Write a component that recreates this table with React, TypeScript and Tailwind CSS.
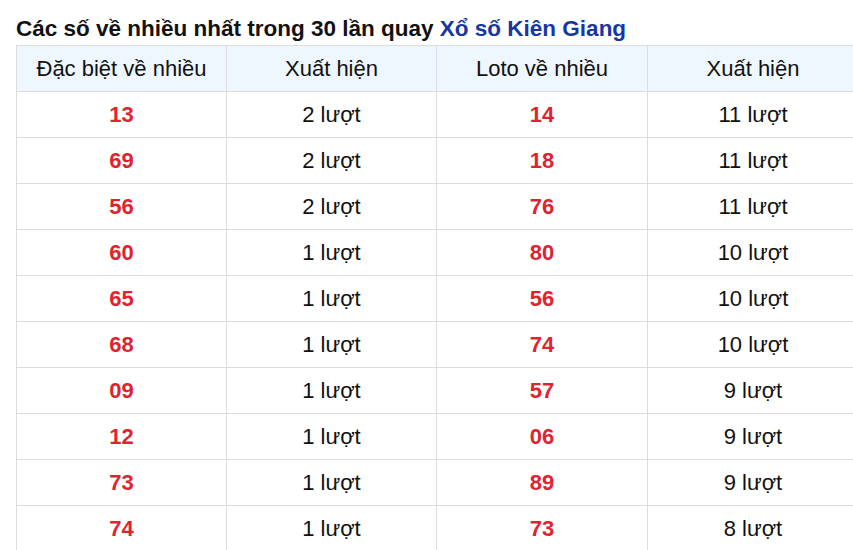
import React from 'react';

const rows: [string, string, string, string][] = [
    ['13', '2 lượt', '14', '11 lượt'],
    ['69', '2 lượt', '18', '11 lượt'],
    ['56', '2 lượt', '76', '11 lượt'],
    ['60', '1 lượt', '80', '10 lượt'],
    ['65', '1 lượt', '56', '10 lượt'],
    ['68', '1 lượt', '74', '10 lượt'],
    ['09', '1 lượt', '57', '9 lượt'],
    ['12', '1 lượt', '06', '9 lượt'],
    ['73', '1 lượt', '89', '9 lượt'],
    ['74', '1 lượt', '73', '8 lượt'],
];

const App: React.FC = () => {
    return (
        <div className="w-[853px] h-[550px] overflow-hidden bg-white pl-4 pt-[13px] font-['Liberation_Sans',Arial,sans-serif] text-[#111]">
            <h2 className="text-[22.5px] font-bold leading-[32px] whitespace-nowrap">
                Các số về nhiều nhất trong 30 lần quay <span className="text-[#1636a3]">Xổ số Kiên Giang</span>
            </h2>
            <table className="w-[843px] border-collapse table-fixed text-[22px] text-center">
                <thead>
                    <tr className="h-[46px] bg-[#eef6ff]">
                        <th className="w-[210px] border border-[#dcdcdc] font-normal">Đặc biệt về nhiều</th>
                        <th className="w-[210px] border border-[#dcdcdc] font-normal">Xuất hiện</th>
                        <th className="w-[211px] border border-[#dcdcdc] font-normal">Loto về nhiều</th>
                        <th className="border border-[#dcdcdc] font-normal">Xuất hiện</th>
                    </tr>
                </thead>
                <tbody>
                    {rows.map((r, i) => (
                        <tr key={i} className="h-[46px]">
                            <td className="border border-[#dcdcdc] pb-[1px] font-bold text-[#e0242f]">{r[0]}</td>
                            <td className="border border-[#dcdcdc] pb-[1px]">{r[1]}</td>
                            <td className="border border-[#dcdcdc] pb-[1px] font-bold text-[#e0242f]">{r[2]}</td>
                            <td className="border border-[#dcdcdc] pb-[1px]">{r[3]}</td>
                        </tr>
                    ))}
                </tbody>
            </table>
        </div>
    );
};

export default App;
